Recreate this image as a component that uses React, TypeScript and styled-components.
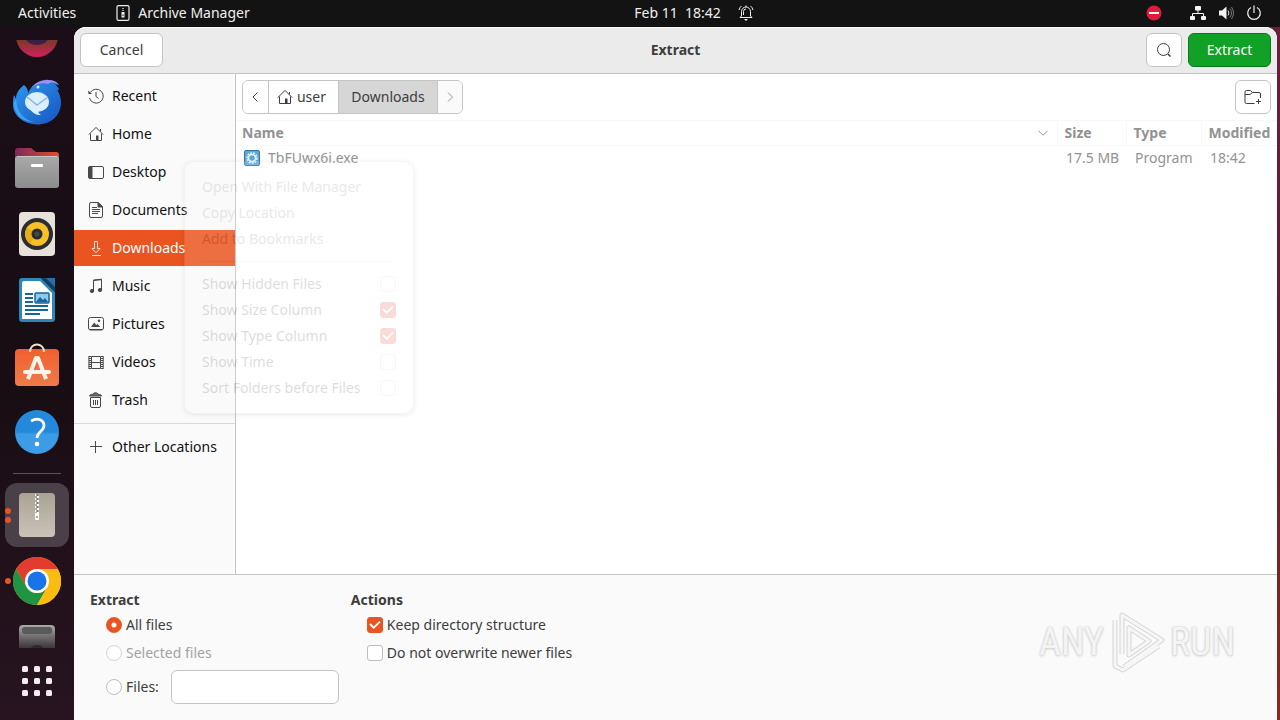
import React from 'react';
import styled, { createGlobalStyle, css } from 'styled-components';

const orange = '#e95420';
const line = '#c4c4c4';

const GlobalStyle = createGlobalStyle`
  *, *::before, *::after { box-sizing: border-box; }
  body { margin: 0; background: #1a0e17; }
  body, button, input { font-family: "Noto Sans", "Open Sans", sans-serif; font-size: 14px; line-height: 20px; }
  button { margin: 0; padding: 0; border: 0; background: none; color: inherit; cursor: default; }
  svg { display: block; flex: none; }
`;

const Desktop = styled.div`
  display: flex;
  flex-direction: column;
  min-height: 100vh;
  overflow: hidden;
`;

const TopBar = styled.header`
  display: grid;
  grid-template-columns: 1fr auto 1fr;
  align-items: center;
  height: 27px;
  padding: 0 18px 1px;
  background: #131313;
  color: #f0f0f0;
`;

const TopGroup = styled.div<{ $gap: number; $end?: boolean }>`
  display: flex;
  align-items: center;
  gap: ${(p) => p.$gap}px;
  justify-content: ${(p) => (p.$end ? 'flex-end' : 'flex-start')};
`;

const TopButton = styled.button`
  display: flex;
  align-items: center;
  gap: 8px;
  white-space: pre;
`;

const Clock = styled(TopButton)`
  gap: 17px;
  padding-left: 108px;
`;

const Workspace = styled.div`
  display: flex;
  flex: 1;
  padding-right: 3px;
  background:
    linear-gradient(#1b0e18, #1b0e18) left / 100px 100% no-repeat,
    linear-gradient(#6a1f3e, #5a1c33 50%, #8a2a1c);
`;

const Dock = styled.nav`
  display: flex;
  flex-direction: column;
  width: 74px;
  flex: none;
  padding-top: 13px;
  background: linear-gradient(#1b0e18, #180d13 50%, #271420);
`;

const DockSlot = styled.button<{ $clip?: 'top' | 'bottom' }>`
  position: relative;
  display: flex;
  justify-content: center;
  align-items: center;
  width: 74px;
  height: 66px;
  flex: none;
  ${(p) => p.$clip === 'top' && css`
    height: 29px;
    padding-bottom: 11px;
    align-items: flex-end;
    overflow: hidden;
  `}
  ${(p) => p.$clip === 'bottom' && css`
    height: 34px;
    padding-top: 9px;
    align-items: flex-start;
    overflow: hidden;
  `}
`;

const DockTile = styled.span<{ $active?: boolean }>`
  display: flex;
  align-items: center;
  justify-content: center;
  width: 64px;
  height: 64px;
  border-radius: 12px;
  background: ${(p) => (p.$active ? '#4a4048' : 'transparent')};
`;

const Pips = styled.span`
  position: absolute;
  left: 5px;
  top: 0;
  bottom: 0;
  display: flex;
  flex-direction: column;
  justify-content: center;
  gap: 3px;
`;

const Pip = styled.i`
  width: 6px;
  height: 6px;
  border-radius: 50%;
  background: ${orange};
`;

const DockDivider = styled.hr`
  width: 48px;
  height: 1px;
  margin: 8px auto;
  border: 0;
  background: #5d5259;
`;

const Dialog = styled.main`
  position: relative;
  display: flex;
  flex-direction: column;
  flex: 1;
  min-width: 0;
  border-radius: 12px 12px 0 0;
  background: #fff;
  color: #3d3d3d;
`;

const HeaderBar = styled.div`
  display: grid;
  grid-template-columns: 1fr auto 1fr;
  align-items: center;
  height: 47px;
  padding: 0 6px;
  border-bottom: 1px solid ${line};
  border-radius: 12px 12px 0 0;
  background: #ebebeb;
  box-shadow: inset 0 1px 0 #f9f9f9;
`;

const HeaderActions = styled.div`
  display: flex;
  justify-content: flex-end;
  gap: 6px;
`;

const Title = styled.h1`
  margin: 0;
  font-size: 14px;
  line-height: 20px;
`;

const Button = styled.button<{ $wide?: boolean; $primary?: boolean }>`
  display: flex;
  align-items: center;
  justify-content: center;
  width: ${(p) => (p.$wide ? 83 : 36)}px;
  height: 34px;
  border: 1px solid ${(p) => (p.$primary ? '#0b7a1c' : line)};
  border-radius: 6px;
  background: ${(p) => (p.$primary ? '#12a127' : '#fff')};
  color: ${(p) => (p.$primary ? '#fff' : '#3d3d3d')};
`;

const Browser = styled.div`
  display: flex;
  flex: 1;
`;

const Sidebar = styled.nav`
  display: flex;
  flex-direction: column;
  gap: 2px;
  width: 162px;
  flex: none;
  padding-top: 4px;
  border-right: 1px solid ${line};
  background: #fafafa;
`;

const Place = styled.button<{ $selected?: boolean }>`
  display: flex;
  align-items: center;
  gap: 8px;
  height: 36px;
  padding-left: 14px;
  white-space: nowrap;
  color: ${(p) => (p.$selected ? '#fff' : '#111')};
  background: ${(p) => (p.$selected ? orange : 'transparent')};
  svg { color: ${(p) => (p.$selected ? '#ffe3d8' : '#484848')}; }
`;

const SidebarRule = styled.hr`
  width: 100%;
  height: 1px;
  margin: 3px 0;
  border: 0;
  background: #d9d9d9;
`;

const Content = styled.section`
  flex: 1;
  min-width: 0;
`;

const PathRow = styled.div`
  display: flex;
  justify-content: space-between;
  padding: 6px;
`;

const PathBar = styled.div`
  display: flex;
  height: 34px;
  overflow: hidden;
  border: 1px solid ${line};
  border-radius: 6px;
`;

const Crumb = styled.button<{ $width: number; $current?: boolean; $dim?: boolean }>`
  display: flex;
  align-items: center;
  justify-content: center;
  gap: 4px;
  width: ${(p) => p.$width}px;
  background: ${(p) => (p.$current ? '#d6d6d6' : p.$dim ? '#fafafa' : '#fff')};
  color: ${(p) => (p.$dim ? '#9a9a9a' : '#3d3d3d')};
  & + & { border-left: 1px solid ${line}; }
`;

const HomeCrumb = styled(Crumb)`
  padding-right: 4px;
`;

const FileTable = styled.table`
  width: 100%;
  table-layout: fixed;
  border-collapse: collapse;
  color: #929292;
  white-space: nowrap;
  th, td { padding: 0 0 0 7px; text-align: left; }
  th { height: 25px; border: solid #f8f8f8; border-width: 1px 0 1px 1px; }
  td { height: 24px; padding-left: 9px; }
  th:first-child { padding-left: 6px; border-left: 0; }
  td:first-child { padding-left: 8px; }
`;

const Column = styled.col<{ $width?: number }>`
  width: ${(p) => (p.$width ? `${p.$width}px` : 'auto')};
`;

const HeadCell = styled.div`
  display: flex;
  align-items: center;
  justify-content: space-between;
  padding-right: 8px;
`;

const FileName = styled.div`
  display: flex;
  align-items: center;
  gap: 8px;
`;

const Options = styled.form`
  position: relative;
  display: flex;
  gap: 12px;
  padding: 15px 16px 16px;
  border-top: 1px solid ${line};
  background: #fafafa;
`;

const Group = styled.fieldset`
  display: flex;
  flex-direction: column;
  gap: 6px;
  min-width: 0;
  margin: 0;
  padding: 0;
  border: 0;
`;

const Legend = styled.legend`
  margin-bottom: 4px;
  padding: 0;
  font-weight: 700;
  line-height: 20px;
`;

const Choice = styled.label<{ $disabled?: boolean }>`
  display: flex;
  align-items: center;
  gap: 4px;
  height: 22px;
  padding-left: 16px;
  color: ${(p) => (p.$disabled ? '#a3a3a3' : 'inherit')};
`;

const FilesRow = styled.div`
  display: flex;
  align-items: center;
  gap: 12px;
`;

const TextBox = styled.input`
  width: 168px;
  height: 34px;
  padding: 0 8px;
  border: 1px solid ${line};
  border-radius: 6px;
  background: #fff;
`;

const Radio = styled.input.attrs({ type: 'radio' })`
  appearance: none;
  width: 16px;
  height: 16px;
  margin: 0;
  border: 1px solid #bdbdbd;
  border-radius: 50%;
  background: #fff;
  &:disabled { border-color: #d4d4d4; }
  &:checked {
    border-color: ${orange};
    background: radial-gradient(circle, #fff 2px, ${orange} 3px);
  }
`;

const CheckWrap = styled.span`
  display: grid;
  width: 16px;
  height: 16px;
  flex: none;
  > * { grid-area: 1 / 1; }
  svg { pointer-events: none; }
`;

const CheckInput = styled.input.attrs({ type: 'checkbox' })`
  appearance: none;
  width: 16px;
  height: 16px;
  margin: 0;
  border: 1px solid #bdbdbd;
  border-radius: 3px;
  background: #fff;
  &:checked { border-color: ${orange}; background: ${orange}; }
`;

const Menu = styled.div`
  position: absolute;
  left: 110px;
  top: 134px;
  width: 230px;
  padding: 12px 17px;
  border: 1px solid #c8c8c8;
  border-radius: 10px;
  background: #fff;
  box-shadow: 0 1px 4px rgba(0, 0, 0, 0.5);
  color: #1c1c1c;
  opacity: 0.15;
  ${CheckInput} { border-color: #d0d0d0; }
  ${CheckInput}:checked { border-color: #e01800; background: #e01800; }
`;

const MenuAction = styled.button`
  display: block;
  height: 26px;
  color: #6c6c6c;
`;

const MenuToggle = styled.label`
  display: flex;
  align-items: center;
  justify-content: space-between;
  height: 26px;
  white-space: nowrap;
`;

const MenuRule = styled.hr`
  height: 1px;
  margin: 9px 6px 9px 0;
  border: 0;
  background: #d0d0d0;
`;

const Watermark = styled.div`
  position: absolute;
  right: 42px;
  bottom: 46px;
  display: flex;
  align-items: center;
  gap: 4px;
  font-family: "Liberation Sans Narrow", "Roboto Condensed", "DejaVu Sans Condensed", sans-serif;
  font-size: 38px;
  line-height: 64px;
  color: #f4f4f4;
  text-shadow: 0 0 2px #c4c4c4, 0 1px 3px #d2d2d2;
`;

type IconProps = { children: React.ReactNode; size?: number };
const Glyph = ({ children, size = 16 }: IconProps) => (
  <svg width={size} height={size} viewBox="0 0 16 16" fill="none" stroke="currentColor" strokeWidth="1" aria-hidden="true">
    {children}
  </svg>
);

const HomeIcon = () => (
  <Glyph>
    <path d="M.8 8.6 8 1.4l7.2 7.2M2.5 7.5v7h11v-7M12.5 5.5V3" />
    <path d="M8 14.500V9.500h2.500v5z" fill="currentColor" stroke="none" />
  </Glyph>
);

const Check = ({ label, checked }: { label: string; checked?: boolean }) => (
  <CheckWrap>
    <CheckInput aria-label={label} defaultChecked={checked} />
    {checked && (
      <svg width="16" height="16" viewBox="0 0 16 16" fill="none" stroke="#fff" strokeWidth="1.800">
        <path d="m3 7 3.700 3.700 6.300-6" />
      </svg>
    )}
  </CheckWrap>
);

const places: { name: string; icon: React.ReactNode; selected?: boolean }[] = [
  {
    name: 'Recent',
    icon: <Glyph><path d="M2.300 4.500A7 7 0 1 1 1.500 10M8 4v4.500l2.500 2" /><path d="M0 2.500 4 6H.5z" fill="currentColor" stroke="none" /></Glyph>,
  },
  { name: 'Home', icon: <HomeIcon /> },
  {
    name: 'Desktop',
    icon: <Glyph><rect x=".5" y="2.500" width="15" height="12" rx="1.500" /><path d="M1 3h3v11H1z" fill="currentColor" /></Glyph>,
  },
  {
    name: 'Documents',
    icon: <Glyph><path d="M1.500 2A1.500 1.500 0 0 1 3 .5h7.500l4 4V14a1.500 1.500 0 0 1-1.500 1.500H3A1.500 1.500 0 0 1 1.500 14zM4 5.500h5M4 7.500h8M4 9.500h8M4 11.500h6" /><path d="M10 1v4h4.500z" fill="currentColor" /></Glyph>,
  },
  {
    name: 'Downloads',
    selected: true,
    icon: <Glyph><path d="M6.500 1.500h3v7H12l-4 4.300-4-4.300h2.500zM4 15.500h9" /></Glyph>,
  },
  {
    name: 'Music',
    icon: <Glyph><path d="M5.500 12.500V2l8-.8v10.300M5.500 2.500l8-.8" /><ellipse cx="4" cy="13" rx="1.800" ry="1.500" fill="currentColor" /><ellipse cx="12" cy="12" rx="1.800" ry="1.500" fill="currentColor" /></Glyph>,
  },
  {
    name: 'Pictures',
    icon: <Glyph><rect x=".5" y="1.500" width="15" height="12.500" rx="2" /><path d="m3 11 3.200-4.500 2 2.600L9.500 8l2.800 3z" fill="currentColor" stroke="none" /><circle cx="11" cy="4.800" r="1.200" fill="currentColor" stroke="none" /><path d="M1.500 13.500h13" /></Glyph>,
  },
  {
    name: 'Videos',
    icon: <Glyph><path d="M3.500 2.500h9v12h-9zM3.500 8.500h9M.9 2v13M15.200 2v13" /><path d="M2 2v13M14 2v13" strokeWidth="2" strokeDasharray="1 1" /></Glyph>,
  },
  {
    name: 'Trash',
    icon: <Glyph><path d="M2.500 5.500h10V14a1.500 1.500 0 0 1-1.500 1.500H4A1.500 1.500 0 0 1 2.500 14zM5.500 8v5M7.500 8v5M9.500 8v5" /><path d="M1.500 4C1.500 2.600 3 2.500 5 2.200 5.300.3 9.700.3 10 2.200c2 .3 3.500.4 3.500 1.800z" fill="currentColor" fillOpacity=".8" /></Glyph>,
  },
];

const Art = ({ children }: { children: React.ReactNode }) => (
  <svg width="48" height="48" viewBox="0 0 48 48" aria-hidden="true">{children}</svg>
);

const FirefoxArt = () => (
  <Art>
    <defs>
      <linearGradient id="ff" x1="0" y1="0" x2="0" y2="1">
        <stop offset=".6" stopColor="#7a3a28" /><stop offset="1" stopColor="#d31f5c" />
      </linearGradient>
    </defs>
    <circle cx="24" cy="26" r="21" fill="url(#ff)" />
    <ellipse cx="24" cy="28" rx="11" ry="7" fill="#3a2143" />
  </Art>
);

const ThunderbirdArt = () => (
  <Art>
    <defs>
      <linearGradient id="tb" x1="0" y1="0" x2="1" y2="1">
        <stop offset="0" stopColor="#2f9bf0" /><stop offset="1" stopColor="#1554c0" />
      </linearGradient>
    </defs>
    <path d="M11 7c3 2 4 5 4 8C20 6 27 1 36 2c5 .5 8 2 10 5l-4-.5c3 2 4 4 4 6l-2-1c3 5 4 9 4 13 0 13-10 22-24 22C10 46 0 37 0 27c0-4 0-7 1-10l2 4c0-6 3-10 8-14z" fill="url(#tb)" />
    <path d="M18 10C23 4 29 2 36 2c5 .5 8 2 10 5-4-3-8-3-11-1-5-2-12 0-17 4z" fill="#a68cf0" />
    <path d="M3 21c1 12 6 20 18 23C8 44 1 36 1 25z" fill="#48b5ff" opacity=".7" />
    <ellipse cx="24" cy="24" rx="12" ry="10" fill="#dcefff" />
    <path d="M17 31c3 5 7 6 11 6-2-1-3-3-3-5z" fill="#dcefff" />
    <path d="m14 19 10 8 11-8" fill="none" stroke="#8fb4dd" strokeWidth="1.500" />
    <circle cx="25" cy="9" r="1.500" fill="#d7f0ff" />
  </Art>
);

const FilesArt = () => (
  <Art>
    <defs>
      <linearGradient id="fl"><stop stopColor="#7b2a5a" /><stop offset="1" stopColor="#e0502e" /></linearGradient>
      <linearGradient id="fg" x1="0" y1="0" x2="0" y2="1"><stop stopColor="#a9a9a9" /><stop offset="1" stopColor="#8c8c8c" /></linearGradient>
    </defs>
    <path d="M2 7a3 3 0 0 1 3-3h13l5 4h20a3 3 0 0 1 3 3v20H2z" fill="url(#fl)" />
    <rect x="2" y="12" width="44" height="32" rx="3" fill="url(#fg)" />
    <path d="M4 12.500h40" stroke="#c6c6c6" />
    <rect x="18" y="20" width="12" height="3" rx="1" fill="#fff" />
  </Art>
);

const RhythmboxArt = () => (
  <Art>
    <rect x="6" y="2" width="36" height="44" rx="4" fill="#e6e2d9" />
    <circle cx="24" cy="24" r="16" fill="#2c2c31" />
    <circle cx="24" cy="24" r="12" fill="#f5c126" />
    <path d="M24 24 14 17.500a12 12 0 0 0 3 16z" fill="#e8ac17" />
    <circle cx="24" cy="24" r="5.500" fill="#2a2c33" />
    <circle cx="24" cy="24" r="2.500" fill="#454850" />
  </Art>
);

const WriterArt = () => (
  <Art>
    <path d="M9 2h19l14 14v27a3 3 0 0 1-3 3H9a3 3 0 0 1-3-3V5a3 3 0 0 1 3-3z" fill="#2a87b8" />
    <path d="M11 5h16l12 12v26H9V7a2 2 0 0 1 2-2z" fill="#fff" />
    <path d="M28 2h14v14z" fill="#123f63" /><path d="M33 2h9v9z" fill="#2a6fa5" />
    <path d="M12 18h8M12 22h8M12 26h8M12 30h23M12 34h23M12 38h15" stroke="#17659b" strokeWidth="2" />
    <rect x="22" y="17" width="14" height="10" rx="1" fill="#8ccbee" stroke="#17659b" strokeWidth="1.500" />
    <path d="m23 26 4-5 3 3 2-2 3 4z" fill="#17659b" />
  </Art>
);

const SoftwareArt = () => (
  <Art>
    <defs><linearGradient id="sw" x1="0" y1="0" x2="0" y2="1"><stop stopColor="#f0602e" /><stop offset="1" stopColor="#f07a4a" /></linearGradient></defs>
    <rect x="2" y="7" width="44" height="37" rx="4" fill="url(#sw)" />
    <path d="M17 10c0-10 14-10 14 0" fill="none" stroke="#f7dccb" strokeWidth="2" />
    <path d="m15 37 8-21h2l8 21" fill="none" stroke="#fff3ea" strokeWidth="4" strokeLinejoin="round" />
    <path d="M12 30h24" stroke="#fff3ea" strokeWidth="4" strokeLinecap="round" />
  </Art>
);

const HelpArt = () => (
  <Art>
    <defs><linearGradient id="hp" x1="0" y1="0" x2="0" y2="1"><stop offset=".5" stopColor="#2389dc" /><stop offset=".55" stopColor="#3c9ce6" /></linearGradient></defs>
    <circle cx="24" cy="24" r="22" fill="url(#hp)" />
    <path d="M18 13c7-4 13-1 13 4.500 0 6-7 6-7 12.500" fill="none" stroke="#fff" strokeWidth="2.800" />
    <circle cx="24" cy="36" r="2.300" fill="#fff" />
  </Art>
);

const ArchiveArt = () => (
  <Art>
    <defs><linearGradient id="ar" x1="0" y1="0" x2="0" y2="1"><stop stopColor="#aaa395" /><stop offset="1" stopColor="#c9c4b8" /></linearGradient></defs>
    <rect x="6" y="2" width="36" height="44" rx="4" fill="url(#ar)" />
    <path d="M23 3v22" stroke="#fff" strokeWidth="2" strokeDasharray="2 2" />
    <path d="M25 5v20" stroke="#fff" strokeWidth="2" strokeDasharray="2 2" />
    <path d="M24 3v20" stroke="#4a463e" strokeWidth="1" strokeDasharray="2 2" />
    <rect x="22" y="22" width="4" height="7" rx="1" fill="#fff" /><path d="M23.500 25h1v2h-1z" fill="#555" />
  </Art>
);

const ChromeArt = () => (
  <Art>
    <circle cx="24" cy="24" r="24" fill="#fbbc12" />
    <path d="M3.200 12A24 24 0 0 1 44.800 12H24a12 12 0 0 0-10.400 18z" fill="#e33b2e" />
    <path d="M3.200 12A24 24 0 0 0 24 48l10.400-18a12 12 0 0 1-20.800 0z" fill="#1e9444" />
    <path d="M24 48a24 24 0 0 0 20.800-36H24l10.400 18z" fill="#fbbc12" />
    <circle cx="24" cy="24" r="12" fill="#fff" /><circle cx="24" cy="24" r="9.500" fill="#1a73e8" />
  </Art>
);

const DriveArt = () => (
  <Art>
    <defs><linearGradient id="dr" x1="0" y1="0" x2="0" y2="1"><stop stopColor="#aaa" /><stop offset=".5" stopColor="#40393e" /></linearGradient></defs>
    <rect x="6" y="2" width="36" height="44" rx="4" fill="url(#dr)" />
    <rect x="9" y="4" width="30" height="7" rx="3" fill="#5a5a5a" />
    <ellipse cx="24" cy="25" rx="6" ry="3" fill="#2f292d" />
  </Art>
);

const AppGridArt = () => (
  <Art>
    {[9, 21, 33].map((y) => [9, 21, 33].map((x) => (
      <rect key={`${x}-${y}`} x={x} y={y} width="6" height="6" rx="1.500" fill="#f5edf3" />
    )))}
  </Art>
);

const dockApps = [
  { name: 'Thunderbird', art: <ThunderbirdArt /> },
  { name: 'Files', art: <FilesArt /> },
  { name: 'Rhythmbox', art: <RhythmboxArt /> },
  { name: 'LibreOffice Writer', art: <WriterArt /> },
  { name: 'Ubuntu Software', art: <SoftwareArt /> },
  { name: 'Help', art: <HelpArt /> },
];

const toggles = [
  { name: 'Show Hidden Files' },
  { name: 'Show Size Column', on: true },
  { name: 'Show Type Column', on: true },
  { name: 'Show Time' },
  { name: 'Sort Folders before Files' },
];

const StatusArea = () => (
  <TopGroup $gap={12} $end>
    <svg width="16" height="16" viewBox="0 0 16 16"><circle cx="8" cy="8" r="7.500" fill="#e01b3c" /><path d="M3 8h10" stroke="#fff" strokeWidth="2" /></svg>
    <TopButton aria-label="System menu">
      <TopGroup $gap={12}>
        <svg width="32" height="16" viewBox="-16 0 32 16" fill="#f4f4f4">
          <rect x="5" y="1" width="6" height="4.500" rx="1" /><rect x="0" y="11" width="5" height="4" rx="1" /><rect x="11" y="11" width="5" height="4" rx="1" />
          <path d="M8 5v4M2.500 11V8.500h11V11" fill="none" stroke="#f4f4f4" />
        </svg>
        <svg width="16" height="16" viewBox="0 0 16 16">
          <path d="M1 5.500h3L8.500 1.500v13L4 10.500H1z" fill="#f4f4f4" />
          <path d="M10 5.500q2 2.500 0 5" fill="none" stroke="#e0e0e0" /><path d="M11.800 3.500q3.500 4.500 0 9M13.500 2q4 6 0 12" fill="none" stroke="#777" />
        </svg>
        <svg width="16" height="16" viewBox="0 0 16 16" fill="none" stroke="#f4f4f4" strokeWidth="1.200"><path d="M5 2.500a6.300 6.300 0 1 0 6 0M8 .5V8" /></svg>
      </TopGroup>
    </TopButton>
  </TopGroup>
);

export default function App() {
  return (
    <Desktop>
      <GlobalStyle />
      <TopBar>
        <TopGroup $gap={40}>
          <TopButton>Activities</TopButton>
          <TopButton>
            <svg width="14" height="16" viewBox="0 0 14 16" fill="none" stroke="#f0f0f0">
              <rect x="1" y=".6" width="12" height="14.800" rx="1.500" strokeWidth="1.200" />
              <path d="M7 3v4" strokeWidth="1.300" strokeDasharray="1 1" />
              <path d="M5.500 7h3v5.500h-3z" fill="#f0f0f0" stroke="none" /><path d="M7 9.500v1.500" stroke="#131313" />
            </svg>
            Archive Manager
          </TopButton>
        </TopGroup>
        <Clock>
          {'Feb 11  18:42'}
          <Glyph><path d="M3.500 11V6.500a4.500 4.500 0 0 1 9 0V11l1.500 1.500H2zM5.500 10V6.500q0-2.500 2.500-2.500M1 5q.5-2.500 2.500-4M15 5q-.5-2.500-2.500-4M8 .5V2" /><path d="M6 14h4l-2 2z" fill="currentColor" stroke="none" /></Glyph>
        </Clock>
        <StatusArea />
      </TopBar>

      <Workspace>
        <Dock aria-label="Dock">
          <DockSlot $clip="top" aria-label="Firefox"><FirefoxArt /></DockSlot>
          {dockApps.map((app) => (
            <DockSlot key={app.name} aria-label={app.name}>{app.art}</DockSlot>
          ))}
          <DockDivider />
          <DockSlot aria-label="Archive Manager">
            <DockTile $active><ArchiveArt /></DockTile>
            <Pips><Pip /><Pip /></Pips>
          </DockSlot>
          <DockSlot aria-label="Google Chrome"><ChromeArt /><Pips><Pip /></Pips></DockSlot>
          <DockSlot $clip="bottom" aria-label="Drive"><DriveArt /></DockSlot>
          <DockSlot aria-label="Show Applications"><AppGridArt /></DockSlot>
        </Dock>

        <Dialog>
          <HeaderBar>
            <Button $wide>Cancel</Button>
            <Title>Extract</Title>
            <HeaderActions>
              <Button aria-label="Search">
                <Glyph><circle cx="7.500" cy="7.500" r="6" /><path d="m12 12 2.500 2.500" strokeWidth="1.500" /></Glyph>
              </Button>
              <Button $wide $primary>Extract</Button>
            </HeaderActions>
          </HeaderBar>

          <Browser>
            <Sidebar aria-label="Places">
              {places.map((p) => (
                <Place key={p.name} $selected={p.selected}>{p.icon}{p.name}</Place>
              ))}
              <SidebarRule />
              <Place><Glyph><path d="M2 7.500h12M7.500 2v12" /></Glyph>Other Locations</Place>
            </Sidebar>

            <Content>
              <PathRow>
                <PathBar>
                  <Crumb $width={25} aria-label="Back"><Glyph><path d="m9.500 3.500-4.500 4.500 4.500 4.500" /></Glyph></Crumb>
                  <HomeCrumb $width={70}><HomeIcon />user</HomeCrumb>
                  <Crumb $width={99} $current>Downloads</Crumb>
                  <Crumb $width={25} $dim aria-label="Forward"><Glyph><path d="m6 3.500 4.500 4.500L6 12.500" /></Glyph></Crumb>
                </PathBar>
                <Button aria-label="Create Folder">
                  <svg width="18" height="16" viewBox="0 0 18 16" fill="none" stroke="currentColor">
                    <path d="M10.500 14.500h-8a1.500 1.500 0 0 1-1.500-1.500V3a1.500 1.500 0 0 1 1.500-1.500h4L8.500 3.500H15A1.500 1.500 0 0 1 16.500 5v4M1 5.500h5l2.500-2M12 12.500h5M14.500 10v5" />
                  </svg>
                </Button>
              </PathRow>

              <FileTable>
                <colgroup>
                  <Column /><Column $width={69} /><Column $width={75} /><Column $width={76} />
                </colgroup>
                <thead>
                  <tr>
                    <th><HeadCell>Name<Glyph size={12}><path d="m2 5 6 6 6-6" strokeWidth="1.300" /></Glyph></HeadCell></th>
                    <th>Size</th>
                    <th>Type</th>
                    <th>Modified</th>
                  </tr>
                </thead>
                <tbody>
                  <tr>
                    <td>
                      <FileName>
                        <svg width="16" height="16" viewBox="0 0 16 16">
                          <rect x=".5" y=".5" width="15" height="15" rx="1.500" fill="#5ba7dc" stroke="#37749f" />
                          <circle cx="8" cy="8" r="5" fill="none" stroke="#e4f4ff" strokeWidth="1.500" strokeDasharray="2 1" />
                          <circle cx="8" cy="8" r="3.500" fill="#5ba7dc" stroke="#f2faff" strokeWidth="1.500" />
                        </svg>
                        TbFUwx6i.exe
                      </FileName>
                    </td>
                    <td>17.5 MB</td>
                    <td>Program</td>
                    <td>18:42</td>
                  </tr>
                </tbody>
              </FileTable>
            </Content>
          </Browser>

          <Options>
            <Group>
              <Legend>Extract</Legend>
              <Choice><Radio name="scope" defaultChecked />All files</Choice>
              <Choice $disabled><Radio name="scope" disabled />Selected files</Choice>
              <FilesRow>
                <Choice><Radio name="scope" />Files:</Choice>
                <TextBox type="text" aria-label="Files" />
              </FilesRow>
            </Group>
            <Group>
              <Legend>Actions</Legend>
              <Choice><Check label="Keep directory structure" checked />Keep directory structure</Choice>
              <Choice><Check label="Do not overwrite newer files" />Do not overwrite newer files</Choice>
            </Group>
            <Watermark>
              ANY
              <svg width="58" height="64" viewBox="0 0 58 64" fill="none" strokeLinejoin="round">
                <g stroke="#d6d6d6" strokeWidth="5"><path d="M14 44V5l40 25-38 27M7 10v46l8 4 36-24" /><path d="M21 18v27l20-14z" /></g>
                <g stroke="#f6f6f6" strokeWidth="3"><path d="M14 44V5l40 25-38 27M7 10v46l8 4 36-24" /><path d="M21 18v27l20-14z" /></g>
              </svg>
              RUN
            </Watermark>
          </Options>

          <Menu role="group" aria-label="File list options">
            <MenuAction>Open With File Manager</MenuAction>
            <MenuAction>Copy Location</MenuAction>
            <MenuAction>Add to Bookmarks</MenuAction>
            <MenuRule />
            {toggles.map((t) => (
              <MenuToggle key={t.name}>{t.name}<Check label={t.name} checked={t.on} /></MenuToggle>
            ))}
          </Menu>
        </Dialog>
      </Workspace>
    </Desktop>
  );
}
